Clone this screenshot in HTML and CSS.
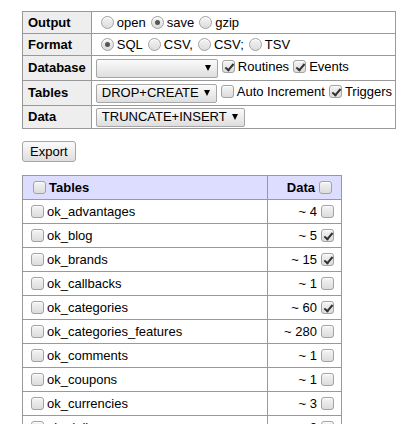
FILE: index.html
```html
<!DOCTYPE html>
<html>
<head>
<meta charset="utf-8">
<title>Export</title>
<link rel="stylesheet" href="styles.css">
</head>
<body>
<div class="page">
<table class="opts">
<tr class="r22"><th>Output</th><td><label><input type="radio" name="output">open</label><label><input type="radio" name="output" checked>save</label><label><input type="radio" name="output">gzip</label></td></tr>
<tr class="r22"><th>Format</th><td><label><input type="radio" name="format" checked>SQL</label><label><input type="radio" name="format">CSV,</label><label><input type="radio" name="format">CSV;</label><label><input type="radio" name="format">TSV</label></td></tr>
<tr class="r25"><th>Database</th><td><span class="select db"><span class="val"></span></span><label><input type="checkbox" checked>Routines</label><label><input type="checkbox" checked>Events</label></td></tr>
<tr class="r25"><th>Tables</th><td><span class="select"><span class="val">DROP+CREATE</span></span><label><input type="checkbox">Auto Increment</label><label><input type="checkbox" checked>Triggers</label></td></tr>
<tr class="r23"><th>Data</th><td><span class="select"><span class="val">TRUNCATE+INSERT</span></span></td></tr>
</table>
<p class="actions"><button class="btn" type="button">Export</button></p>
<table class="list">
<thead>
<tr><th class="tcol"><label><input type="checkbox">Tables</label></th><th class="dcol"><label>Data<input type="checkbox"></label></th></tr>
</thead>
<tbody>
<tr><td><label><input type="checkbox">ok_advantages</label></td><td class="num"><label>~ 4<input type="checkbox"></label></td></tr>
<tr><td><label><input type="checkbox">ok_blog</label></td><td class="num"><label>~ 5<input type="checkbox" checked></label></td></tr>
<tr><td><label><input type="checkbox">ok_brands</label></td><td class="num"><label>~ 15<input type="checkbox" checked></label></td></tr>
<tr><td><label><input type="checkbox">ok_callbacks</label></td><td class="num"><label>~ 1<input type="checkbox"></label></td></tr>
<tr><td><label><input type="checkbox">ok_categories</label></td><td class="num"><label>~ 60<input type="checkbox" checked></label></td></tr>
<tr><td><label><input type="checkbox">ok_categories_features</label></td><td class="num"><label>~ 280<input type="checkbox"></label></td></tr>
<tr><td><label><input type="checkbox">ok_comments</label></td><td class="num"><label>~ 1<input type="checkbox"></label></td></tr>
<tr><td><label><input type="checkbox">ok_coupons</label></td><td class="num"><label>~ 1<input type="checkbox"></label></td></tr>
<tr><td><label><input type="checkbox">ok_currencies</label></td><td class="num"><label>~ 3<input type="checkbox"></label></td></tr>
<tr><td><label><input type="checkbox">ok_delivery</label></td><td class="num"><label>~ 2<input type="checkbox"></label></td></tr>
</tbody>
</table>
</div>
</body>
</html>
```
FILE: styles.css
```css
* { box-sizing: border-box; }
html, body { margin: 0; padding: 0; background: #fff; }
body {
  font: 13px/16px "Liberation Sans", Arial, Helvetica, sans-serif;
  color: #000;
}
.page { padding: 11px 0 0 22px; }
table { border-collapse: collapse; }
th, td {
  border: 1px solid #999;
  padding: 0 4px;
  text-align: left;
  vertical-align: middle;
  white-space: nowrap;
}
.opts { width: 374px; }
.opts th { background: #eee; font-weight: bold; width: 66px; padding: 0 5px; }
.opts td { padding: 0 2px 0 4px; }
.opts .r22 { height: 22px; }
.opts .r25 { height: 25px; }
.opts .r23 { height: 23px; }

input[type="radio"], input[type="checkbox"] {
  -webkit-appearance: none;
  appearance: none;
  width: 13px;
  height: 13px;
  display: inline-block;
  position: relative;
  vertical-align: -2px;
  border: 1px solid #a2a2a2;
  background: linear-gradient(#f4f4f4, #dcdcdc);
  box-shadow: inset 0 1px 0 #fff;
}
input[type="radio"] {
  border-radius: 50%;
  margin: 0 3px 0 5px;
}
input[type="checkbox"] {
  border-radius: 3px;
  margin: 0 3px 0 4px;
}
input[type="radio"]:checked::after {
  content: "";
  position: absolute;
  left: 3px;
  top: 3px;
  width: 5px;
  height: 5px;
  border-radius: 50%;
  background: #555;
}
input[type="checkbox"]:checked::after {
  content: "";
  position: absolute;
  left: 4px;
  top: 1px;
  width: 3px;
  height: 7px;
  border: solid #333;
  border-width: 0 2px 2px 0;
  transform: rotate(40deg);
}

.select {
  display: inline-flex;
  align-items: center;
  justify-content: space-between;
  gap: 5px;
  height: 19px;
  padding: 0 6px 0 5px;
  border: 1px solid #a6a6a6;
  border-radius: 2px;
  background: linear-gradient(#fbfbfb, #dedede);
  vertical-align: middle;
}
.select.db { width: 122px; }
.select::after {
  content: "";
  border-left: 3px solid transparent;
  border-right: 3px solid transparent;
  border-top: 6px solid #000;
  flex: none;
}

.actions { margin: 12px 0 13px; }
.btn {
  font: 13px/16px "Liberation Sans", Arial, Helvetica, sans-serif;
  color: #000;
  height: 21px;
  padding: 0 7px;
  border: 1px solid #a6a6a6;
  border-radius: 3px;
  background: linear-gradient(#fbfbfb, #dedede);
}

.list { width: 320px; }
.list tr { height: 24px; }
.list thead th { background: #ddf; font-weight: bold; padding: 0 6px; }
.list .tcol { width: 245px; }
.list .dcol { text-align: right; }
.list td.num { text-align: right; }
```
